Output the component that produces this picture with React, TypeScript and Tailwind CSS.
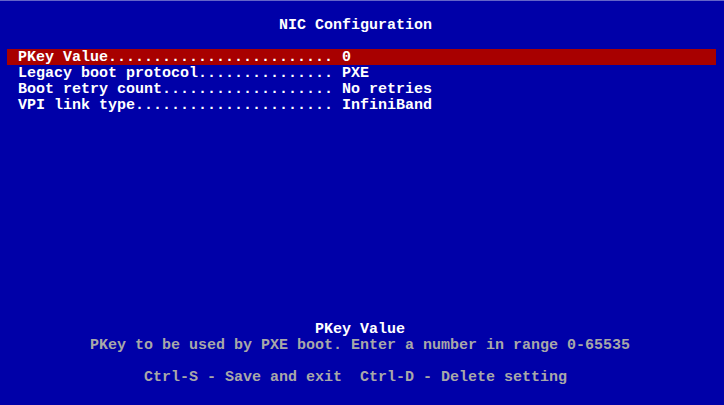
import React from "react";

const rows: { label: string; value: string; selected?: boolean }[] = [
  { label: "PKey Value", value: "0", selected: true },
  { label: "Legacy boot protocol", value: "PXE" },
  { label: "Boot retry count", value: "No retries" },
  { label: "VPI link type", value: "InfiniBand" },
];

const pad = (n: number) => " ".repeat(n);

export default function App() {
  return (
    <div
      className="w-[724px] h-[405px] bg-[#0000a8] flex flex-col overflow-hidden text-[15px] leading-[18px] font-bold"
      style={{ fontFamily: '"Liberation Mono", "DejaVu Sans Mono", monospace' }}
    >
      <div className="h-px bg-[#6464c8]" />
      <div className="h-[16px]" />
      <div className="h-[16px] whitespace-pre text-white">{pad(31) + "NIC Configuration"}</div>
      <div className="h-[16px]" />
      <div className="flex flex-col">
        {rows.map((r) => (
          <div
            key={r.label}
            className={
              "h-[16px] ml-[7px] w-[709px] pl-[11px] whitespace-pre text-white " +
              (r.selected ? "bg-[#a80000]" : "")
            }
          >
            {r.label + ".".repeat(35 - r.label.length) + " " + r.value}
          </div>
        ))}
      </div>
      <div className="flex-1" />
      <div className="h-[16px] whitespace-pre text-white">{pad(35) + "PKey Value"}</div>
      <div className="h-[16px] whitespace-pre text-[#a8a8a8]">
        {pad(10) + "PKey to be used by PXE boot. Enter a number in range 0-65535"}
      </div>
      <div className="h-[16px]" />
      <div className="h-[16px] whitespace-pre text-[#a8a8a8]">
        {pad(16) + "Ctrl-S - Save and exit  Ctrl-D - Delete setting"}
      </div>
      <div className="h-[20px]" />
    </div>
  );
}
